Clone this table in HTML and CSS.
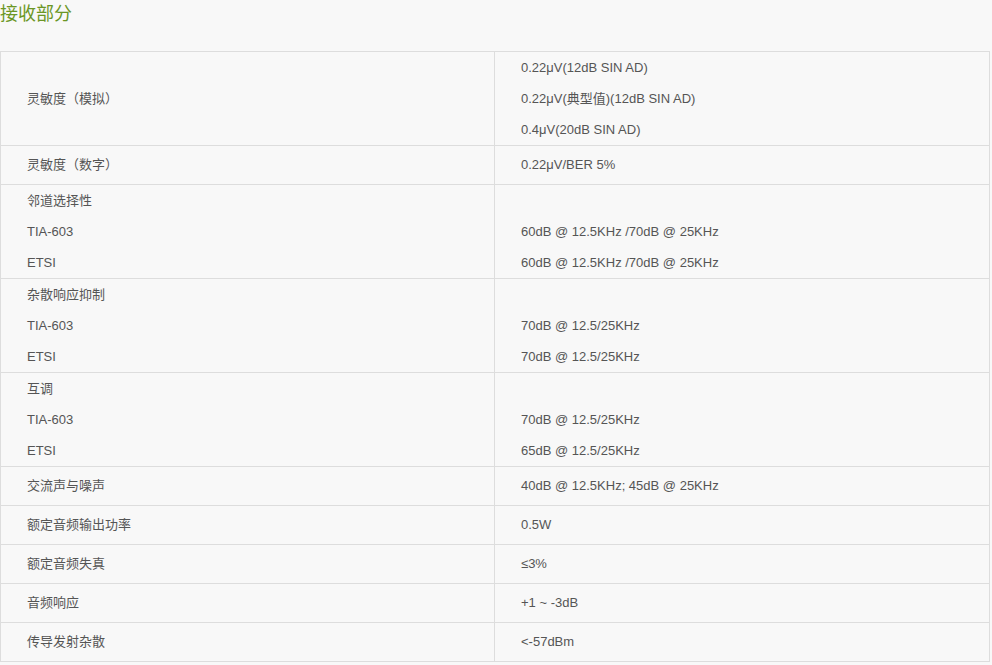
FILE: index.html
```html
<!DOCTYPE html>
<html lang="zh-CN">
<head>
<meta charset="utf-8">
<title>接收部分</title>
<link rel="stylesheet" href="styles.css">
</head>
<body>
<h2 class="title">接收部分</h2>
<div class="spec">
  <div class="cell"><div class="ln">灵敏度（模拟）</div></div>
  <div class="cell">
    <div class="ln">0.22μV(12dB SIN AD)</div>
    <div class="ln">0.22μV(典型值)(12dB SIN AD)</div>
    <div class="ln">0.4μV(20dB SIN AD)</div>
  </div>

  <div class="cell single"><div class="ln">灵敏度（数字）</div></div>
  <div class="cell single"><div class="ln">0.22μV/BER 5%</div></div>

  <div class="cell">
    <div class="ln">邻道选择性</div>
    <div class="ln">TIA-603</div>
    <div class="ln">ETSI</div>
  </div>
  <div class="cell">
    <div class="ln">&nbsp;</div>
    <div class="ln">60dB @ 12.5KHz /70dB @ 25KHz</div>
    <div class="ln">60dB @ 12.5KHz /70dB @ 25KHz</div>
  </div>

  <div class="cell">
    <div class="ln">杂散响应抑制</div>
    <div class="ln">TIA-603</div>
    <div class="ln">ETSI</div>
  </div>
  <div class="cell">
    <div class="ln">&nbsp;</div>
    <div class="ln">70dB @ 12.5/25KHz</div>
    <div class="ln">70dB @ 12.5/25KHz</div>
  </div>

  <div class="cell">
    <div class="ln">互调</div>
    <div class="ln">TIA-603</div>
    <div class="ln">ETSI</div>
  </div>
  <div class="cell">
    <div class="ln">&nbsp;</div>
    <div class="ln">70dB @ 12.5/25KHz</div>
    <div class="ln">65dB @ 12.5/25KHz</div>
  </div>

  <div class="cell single"><div class="ln">交流声与噪声</div></div>
  <div class="cell single"><div class="ln">40dB @ 12.5KHz; 45dB @ 25KHz</div></div>

  <div class="cell single"><div class="ln">额定音频输出功率</div></div>
  <div class="cell single"><div class="ln">0.5W</div></div>

  <div class="cell single"><div class="ln">额定音频失真</div></div>
  <div class="cell single"><div class="ln">≤3%</div></div>

  <div class="cell single"><div class="ln">音频响应</div></div>
  <div class="cell single"><div class="ln">+1 ~ -3dB</div></div>

  <div class="cell single"><div class="ln">传导发射杂散</div></div>
  <div class="cell single"><div class="ln">&lt;-57dBm</div></div>
</div>
</body>
</html>
```

FILE: styles.css
```css
html, body {
  margin: 0;
  padding: 0;
  background: #f8f8f8;
}

body {
  font-family: "Liberation Sans", "Noto Sans CJK SC", sans-serif;
  font-size: 13px;
  color: #555555;
}

.title {
  margin: 0 0 23px 0;
  height: 28px;
  line-height: 28px;
  font-size: 18px;
  font-weight: normal;
  color: #6b9624;
}

.spec {
  display: grid;
  grid-template-columns: 494px 495px;
  width: 989px;
  border-top: 1px solid #dddddd;
  border-left: 1px solid #dddddd;
}

.cell {
  display: flex;
  flex-direction: column;
  justify-content: center;
  min-height: 38px;
  padding: 0 0 0 26px;
  border-right: 1px solid #dddddd;
  border-bottom: 1px solid #dddddd;
}

.cell.single {
  min-height: 37px;
  padding-bottom: 1px;
}

.ln {
  line-height: 31px;
  white-space: nowrap;
}
```
